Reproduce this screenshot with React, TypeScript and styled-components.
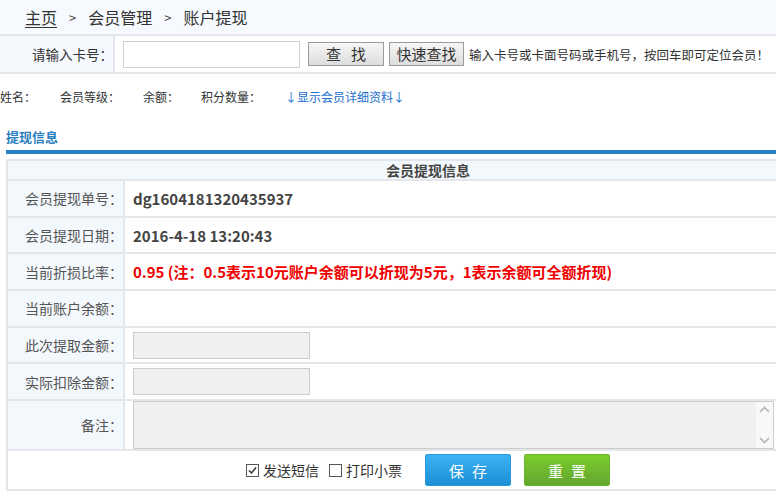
import styled, { createGlobalStyle } from 'styled-components';

const GlobalStyle = createGlobalStyle`
  html, body {
    margin: 0;
    padding: 0;
    background: #fff;
    overflow: hidden;
  }
  body {
    font-family: "Noto Sans CJK SC", "Noto Sans", sans-serif;
    color: #333;
  }
`;

const lineColor = '#e3e7eb';
const labelBg = '#f3f8fd';

const Page = styled.div`
  width: 776px;
  height: 492px;
  overflow: hidden;
`;

const Breadcrumb = styled.div`
  height: 34px;
  background: #f6fafe;
  display: flex;
  align-items: center;
  padding-left: 25px;
  font-size: 16px;
  color: #333;
  gap: 12px;
`;

const HomeLink = styled.span`
  text-decoration: underline;
  text-underline-offset: 3px;
`;

const Sep = styled.span`
  font-size: 13px;
  color: #444;
`;

const SearchRow = styled.div`
  display: grid;
  grid-template-columns: 115px 1fr;
  border-top: 2px solid ${lineColor};
  border-bottom: 2px solid ${lineColor};
  height: 36px;
`;

const SearchLabel = styled.div`
  background: #f5f9fe;
  border-right: 2px solid ${lineColor};
  display: flex;
  align-items: center;
  justify-content: flex-end;
  padding-right: 0;
  font-size: 13.5px;
  color: #333;
`;

const SearchBody = styled.div`
  display: flex;
  align-items: center;
  padding-left: 8px;
  white-space: nowrap;
`;

const CardInput = styled.input`
  width: 173px;
  height: 23px;
  border: 1px solid #cfcfcf;
  padding: 1px;
  margin: 0 8px 0 0;
  outline: none;
`;

const GreyButton = styled.button<{ $w: number }>`
  width: ${(p) => p.$w}px;
  height: 24px;
  border: 1px solid #9a9a9a;
  background: linear-gradient(#f6f6f6, #dddddd);
  font-family: "Noto Sans CJK SC", sans-serif;
  font-size: 15px;
  color: #333;
  padding: 0;
  margin-right: 5px;
  line-height: 20px;
`;

const Hint = styled.span`
  font-size: 12.5px;
  color: #333;
`;

const InfoRow = styled.div`
  display: flex;
  align-items: center;
  height: 22px;
  margin-top: 11px;
  font-size: 12px;
  color: #333;
`;

const InfoItem = styled.span<{ $w: number }>`
  width: ${(p) => p.$w}px;
`;

const DetailLink = styled.span`
  color: #1a6fd0;
`;

const Section = styled.div`
  padding-left: 6px;
  margin-top: 21px;
`;

const SectionTitle = styled.div`
  font-size: 13px;
  font-weight: bold;
  color: #2a7fc0;
  height: 17px;
  line-height: 17px;
`;

const BlueBar = styled.div`
  height: 4px;
  background: #2a7fc0;
  margin-top: 5px;
`;

const Table = styled.div`
  width: 840px;
  margin-top: 5px;
  border-top: 2px solid ${lineColor};
  border-left: 2px solid ${lineColor};
`;

const TableHead = styled.div`
  height: 18px;
  background: ${labelBg};
  border-bottom: 2px solid ${lineColor};
  display: flex;
  align-items: center;
  justify-content: center;
  font-size: 14px;
  font-weight: bold;
  color: #444;
`;

const Row = styled.div<{ $h?: number }>`
  display: grid;
  grid-template-columns: 117px 1fr;
  height: ${(p) => p.$h ?? 34.7}px;
  border-bottom: 2px solid ${lineColor};
`;

const Label = styled.div`
  background: ${labelBg};
  border-right: 2px solid ${lineColor};
  display: flex;
  align-items: center;
  justify-content: flex-end;
  padding-right: 0;
  font-size: 14px;
  color: #555;
`;

const Value = styled.div<{ $red?: boolean }>`
  display: flex;
  align-items: center;
  padding-left: 8px;
  font-size: 15px;
  font-weight: bold;
  color: ${(p) => (p.$red ? '#f00000' : '#444')};
  white-space: nowrap;
`;

const FieldInput = styled.input`
  width: 173px;
  height: 23px;
  border: 1px solid #cccccc;
  background: #f0f0f0;
  padding: 1px;
  margin: 0;
`;

const MemoBox = styled.div`
  width: 639px;
  height: 46px;
  border: 1px solid #cccccc;
  background: #f0f0f0;
  display: flex;
`;

const MemoText = styled.textarea`
  flex: 1;
  border: none;
  background: transparent;
  resize: none;
  outline: none;
  padding: 0;
`;

const ScrollTrack = styled.div`
  width: 17px;
  background: #f8f8f8;
  display: flex;
  flex-direction: column;
  justify-content: space-between;
  align-items: center;
  padding: 4px 0;
`;

const ActionRow = styled.div`
  height: 38px;
  border-bottom: 2px solid ${lineColor};
  display: flex;
  align-items: center;
  justify-content: center;
  font-size: 14px;
  color: #333;
`;

const Check = styled.span`
  display: inline-flex;
  align-items: center;
  gap: 4px;
  margin-right: 10px;
`;

const Box = styled.span`
  width: 11px;
  height: 11px;
  border: 1px solid #555;
  display: inline-flex;
  align-items: center;
  justify-content: center;
  background: #fff;
`;

const ColorButton = styled.button<{ $from: string; $to: string; $border: string }>`
  width: 86px;
  height: 32px;
  border: 1px solid ${(p) => p.$border};
  border-radius: 2px;
  background: linear-gradient(${(p) => p.$from}, ${(p) => p.$to});
  color: #fff;
  font-family: "Noto Sans CJK SC", sans-serif;
  font-size: 15px;
  letter-spacing: 8px;
  text-indent: 8px;
  padding: 0;
  margin-left: 13px;
`;

const Chevron = ({ up }: { up?: boolean }) => (
  <svg width="11" height="7" viewBox="0 0 11 7">
    <path
      d={up ? 'M1 6 L5.5 1.5 L10 6' : 'M1 1 L5.5 5.5 L10 1'}
      fill="none"
      stroke="#b5b5b5"
      strokeWidth="1.6"
    />
  </svg>
);

export default function App() {
  return (
    <Page>
      <GlobalStyle />
      <Breadcrumb>
        <HomeLink>主页</HomeLink>
        <Sep>&gt;</Sep>
        <span>会员管理</span>
        <Sep>&gt;</Sep>
        <span>账户提现</span>
      </Breadcrumb>

      <SearchRow>
        <SearchLabel>请输入卡号：</SearchLabel>
        <SearchBody>
          <CardInput />
          <GreyButton $w={76}>查&nbsp;&nbsp;&nbsp;找</GreyButton>
          <GreyButton $w={75}>快速查找</GreyButton>
          <Hint>输入卡号或卡面号码或手机号，按回车即可定位会员！</Hint>
        </SearchBody>
      </SearchRow>

      <InfoRow>
        <InfoItem $w={60}>姓名：</InfoItem>
        <InfoItem $w={83}>会员等级：</InfoItem>
        <InfoItem $w={58}>余额：</InfoItem>
        <InfoItem $w={84}>积分数量：</InfoItem>
        <DetailLink>↓显示会员详细资料↓</DetailLink>
      </InfoRow>

      <Section>
        <SectionTitle>提现信息</SectionTitle>
        <BlueBar />
        <Table>
          <TableHead>会员提现信息</TableHead>
          <Row>
            <Label>会员提现单号：</Label>
            <Value>dg1604181320435937</Value>
          </Row>
          <Row>
            <Label>会员提现日期：</Label>
            <Value>2016-4-18 13:20:43</Value>
          </Row>
          <Row>
            <Label>当前折损比率：</Label>
            <Value $red>0.95 (注：0.5表示10元账户余额可以折现为5元，1表示余额可全额折现)</Value>
          </Row>
          <Row>
            <Label>当前账户余额：</Label>
            <Value />
          </Row>
          <Row>
            <Label>此次提取金额：</Label>
            <Value>
              <FieldInput />
            </Value>
          </Row>
          <Row>
            <Label>实际扣除金额：</Label>
            <Value>
              <FieldInput />
            </Value>
          </Row>
          <Row $h={48}>
            <Label>备注：</Label>
            <Value>
              <MemoBox>
                <MemoText />
                <ScrollTrack>
                  <Chevron up />
                  <Chevron />
                </ScrollTrack>
              </MemoBox>
            </Value>
          </Row>
          <ActionRow>
            <Check>
              <Box>
                <svg width="9" height="9" viewBox="0 0 9 9">
                  <path d="M1 4.5 L3.5 7 L8 1.5" fill="none" stroke="#333" strokeWidth="1.5" />
                </svg>
              </Box>
              发送短信
            </Check>
            <Check>
              <Box />
              打印小票
            </Check>
            <ColorButton $from="#3eb2f5" $to="#1a8fd6" $border="#2a9ae0">
              保存
            </ColorButton>
            <ColorButton $from="#7ccc2e" $to="#62a62e" $border="#6ab432">
              重置
            </ColorButton>
          </ActionRow>
        </Table>
      </Section>
    </Page>
  );
}
